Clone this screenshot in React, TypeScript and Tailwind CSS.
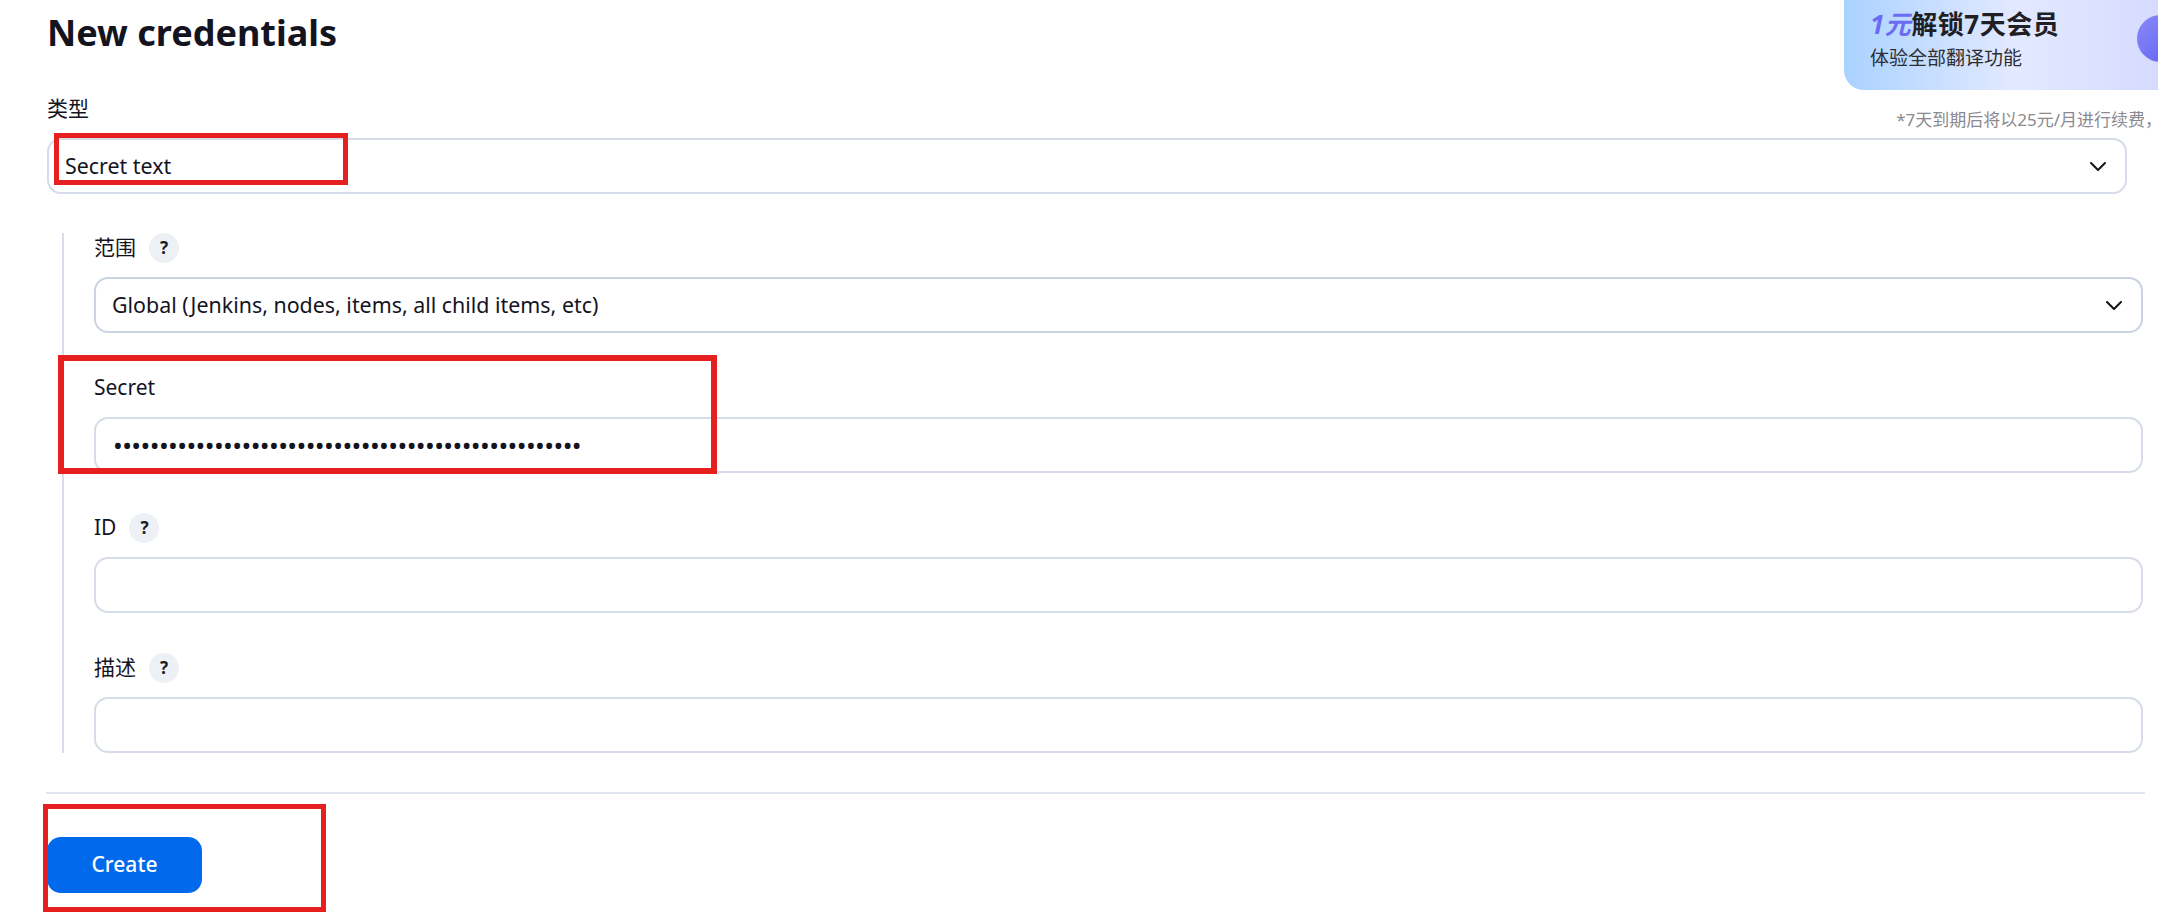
import { ReactNode } from "react";

const font = "font-['Noto_Sans','Noto_Sans_CJK_SC',sans-serif]";

function Help() {
  return (
    <span className="flex h-[30px] w-[30px] items-center justify-center rounded-full bg-[#edf0f5] text-[17px] font-bold text-[#1b1b28]">
      ?
    </span>
  );
}

function Chevron() {
  return (
    <svg width="16" height="9" viewBox="0 0 16 9" fill="none" className="shrink-0">
      <path d="M1 1l7 7 7-7" stroke="#14141f" strokeWidth="2" strokeLinecap="round" strokeLinejoin="round" />
    </svg>
  );
}

function Label({ text, help }: { text: string; help?: boolean }) {
  return (
    <div className="flex h-[30px] items-center gap-[13px] text-[21px] text-[#14141f]">
      <span>{text}</span>
      {help && <Help />}
    </div>
  );
}

function SelectBox({ value, border }: { value: string; border: string }) {
  return (
    <div className={`flex h-[56px] items-center justify-between rounded-[14px] border-2 bg-white pl-[16px] pr-[19px] text-[21.4px] text-[#14141f] ${border}`}>
      <span>{value}</span>
      <Chevron />
    </div>
  );
}

function Field({ label, help, children }: { label: string; help?: boolean; children: ReactNode }) {
  return (
    <div className="flex flex-col gap-[14px]">
      <Label text={label} help={help} />
      {children}
    </div>
  );
}

function TextInput({ type = "text", value }: { type?: string; value?: string }) {
  const pw = type === "password";
  return (
    <input
      type={type}
      readOnly
      value={value ?? ""}
      className={`block h-[56px] w-full rounded-[14px] border-2 border-[#d7dce9] bg-white px-[17px] text-[#14141f] outline-none ${pw ? "text-[26px] tracking-[-0.6px]" : "text-[21px]"}`}
    />
  );
}

function RedBox({ className }: { className: string }) {
  return <div className={`pointer-events-none absolute border-[#e6201f] ${className}`} />;
}

export default function App() {
  return (
    <div className={`relative h-[912px] w-[2158px] overflow-hidden bg-white ${font}`}>
      <div className="flex w-[2127px] flex-col pl-[47px] pt-[11px]">
        <h1 className="h-[44px] text-[36px] font-bold leading-[44px] text-[#14141f]">New credentials</h1>

        <div className="mt-[39px] flex flex-col gap-[14px]">
          <Label text="类型" />
          <SelectBox value="Secret text" border="border-[#d5dbe8]" />
        </div>

        <section className="ml-[15px] mr-[-16px] mt-[39px] flex flex-col gap-[40px] border-l-2 border-[#d8dde9] pl-[30px]">
          <Field label="范围" help>
            <SelectBox value="Global (Jenkins, nodes, items, all child items, etc)" border="border-[#cbd3e2]" />
          </Field>
          <Field label="Secret">
            <TextInput type="password" value={"x".repeat(51)} />
          </Field>
          <Field label="ID" help>
            <TextInput />
          </Field>
          <Field label="描述" help>
            <TextInput />
          </Field>
        </section>

        <div className="ml-[-1px] mr-[-18px] mt-[39px] h-[2px] bg-[#e1e5f0]" />

        <div className="pt-[43px]">
          <button
            type="button"
            className="flex h-[56px] w-[155px] items-center justify-center rounded-[14px] bg-[#0069ec] text-[21px] font-medium text-white"
          >
            Create
          </button>
        </div>
      </div>

      {/* promo banner floating over the top right corner */}
      <div className="absolute right-[-26px] top-[-24px] flex flex-col items-end">
        <div className="relative h-[114px] w-[340px] overflow-hidden rounded-[20px] bg-gradient-to-r from-[#a9d2ff] via-[#e3e9ff] to-[#d4d8ff] pl-[26px] pt-[30px]">
          <div className="flex items-baseline text-[26px] font-bold leading-[36px] tracking-[0.5px] text-[#1f1f24]">
            <span className="italic text-[#6c6cf2]">1元</span>
            <span>解锁7天会员</span>
          </div>
          <div className="mt-[3px] text-[19px] leading-[26px] text-[#2d2d33]">体验全部翻译功能</div>
          <div className="absolute left-[293px] top-[39px] h-[47px] w-[47px] rounded-full bg-gradient-to-br from-[#8b8af8] to-[#5d5ef0]" />
        </div>
        <div className="mr-[22px] mt-[18px] whitespace-nowrap text-[17px] leading-[24px] text-[#8a8a90]">
          *7天到期后将以25元/月进行续费，
        </div>
      </div>

      {/* annotation boxes */}
      <RedBox className="left-[54px] top-[133px] h-[52px] w-[294px] border-[5px]" />
      <RedBox className="left-[58px] top-[355px] h-[119px] w-[659px] border-[6px]" />
      <RedBox className="left-[43px] top-[804px] h-[108px] w-[283px] border-[5px]" />
    </div>
  );
}
